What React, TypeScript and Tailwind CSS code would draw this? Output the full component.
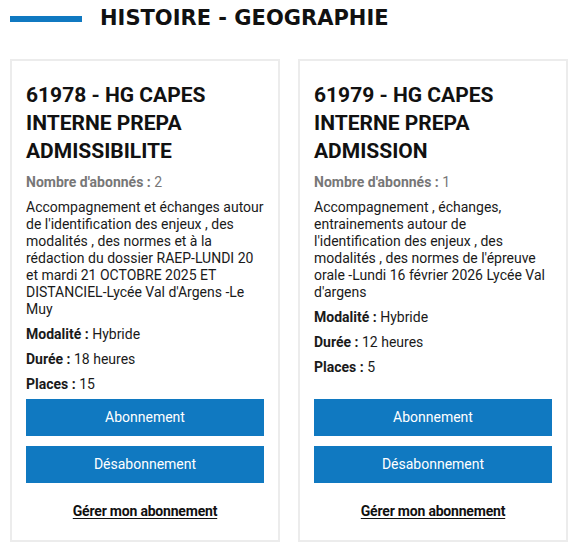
const formations = [
  {
    title: '61978 - HG CAPES INTERNE PREPA ADMISSIBILITE',
    abonnes: 2,
    description:
      "Accompagnement et échanges autour de l'identification des enjeux , des modalités , des normes et à la rédaction du dossier RAEP-LUNDI 20 et mardi 21 OCTOBRE 2025 ET DISTANCIEL-Lycée Val d'Argens -Le Muy",
    modalite: 'Hybride',
    duree: '18 heures',
    places: 15,
  },
  {
    title: '61979 - HG CAPES INTERNE PREPA ADMISSION',
    abonnes: 1,
    description:
      "Accompagnement , échanges, entrainements autour de l'identification des enjeux , des modalités , des normes de l'épreuve orale -Lundi 16 février 2026 Lycée Val d'argens",
    modalite: 'Hybride',
    duree: '12 heures',
    places: 5,
  },
];

function Card({ f }: { f: (typeof formations)[number] }) {
  return (
    <div className="flex flex-col border-2 border-[#ececec] bg-white px-[14px] pt-[20px] pb-[17px]">
      <h2 className="text-[21px] font-bold leading-[28px] text-[#111] pr-2">{f.title}</h2>
      <div className="mt-[9px] flex flex-col gap-[8px] text-[14px] leading-[17px] text-[#1a1a1a]">
        <p className="text-[#777]">
          <span className="font-bold">Nombre d'abonnés :</span> {f.abonnes}
        </p>
        <p>{f.description}</p>
        <p>
          <span className="font-bold">Modalité :</span> {f.modalite}
        </p>
        <p>
          <span className="font-bold">Durée :</span> {f.duree}
        </p>
        <p>
          <span className="font-bold">Places :</span> {f.places}
        </p>
      </div>
      <div className="mt-auto pt-[6px] flex flex-col gap-[10px]">
        <button className="h-[37px] w-full bg-[#1079c1] text-[14px] text-white">Abonnement</button>
        <button className="h-[37px] w-full bg-[#1079c1] text-[14px] text-white">Désabonnement</button>
      </div>
      <div className="mt-[16px] text-center">
        <a className="text-[14px] font-bold text-[#111] underline underline-offset-2 tracking-[-0.2px]">
          Gérer mon abonnement
        </a>
      </div>
    </div>
  );
}

export default function App() {
  return (
    <div className="min-h-[544px] w-[572px] bg-white pl-[10px] pr-[4px] font-['Roboto',sans-serif]">
      <div className="flex h-[36px] items-center gap-[18px] pt-[2px]">
        <div className="h-[6px] w-[72px] bg-[#1079c1]" />
        <h1 className="text-[21px] font-bold text-[#111] font-['DejaVu_Sans',sans-serif]">
          HISTOIRE - GEOGRAPHIE
        </h1>
      </div>
      <div className="mt-[23px] grid grid-cols-[270px_270px] gap-[18px]">
        {formations.map((f) => (
          <Card key={f.title} f={f} />
        ))}
      </div>
    </div>
  );
}
